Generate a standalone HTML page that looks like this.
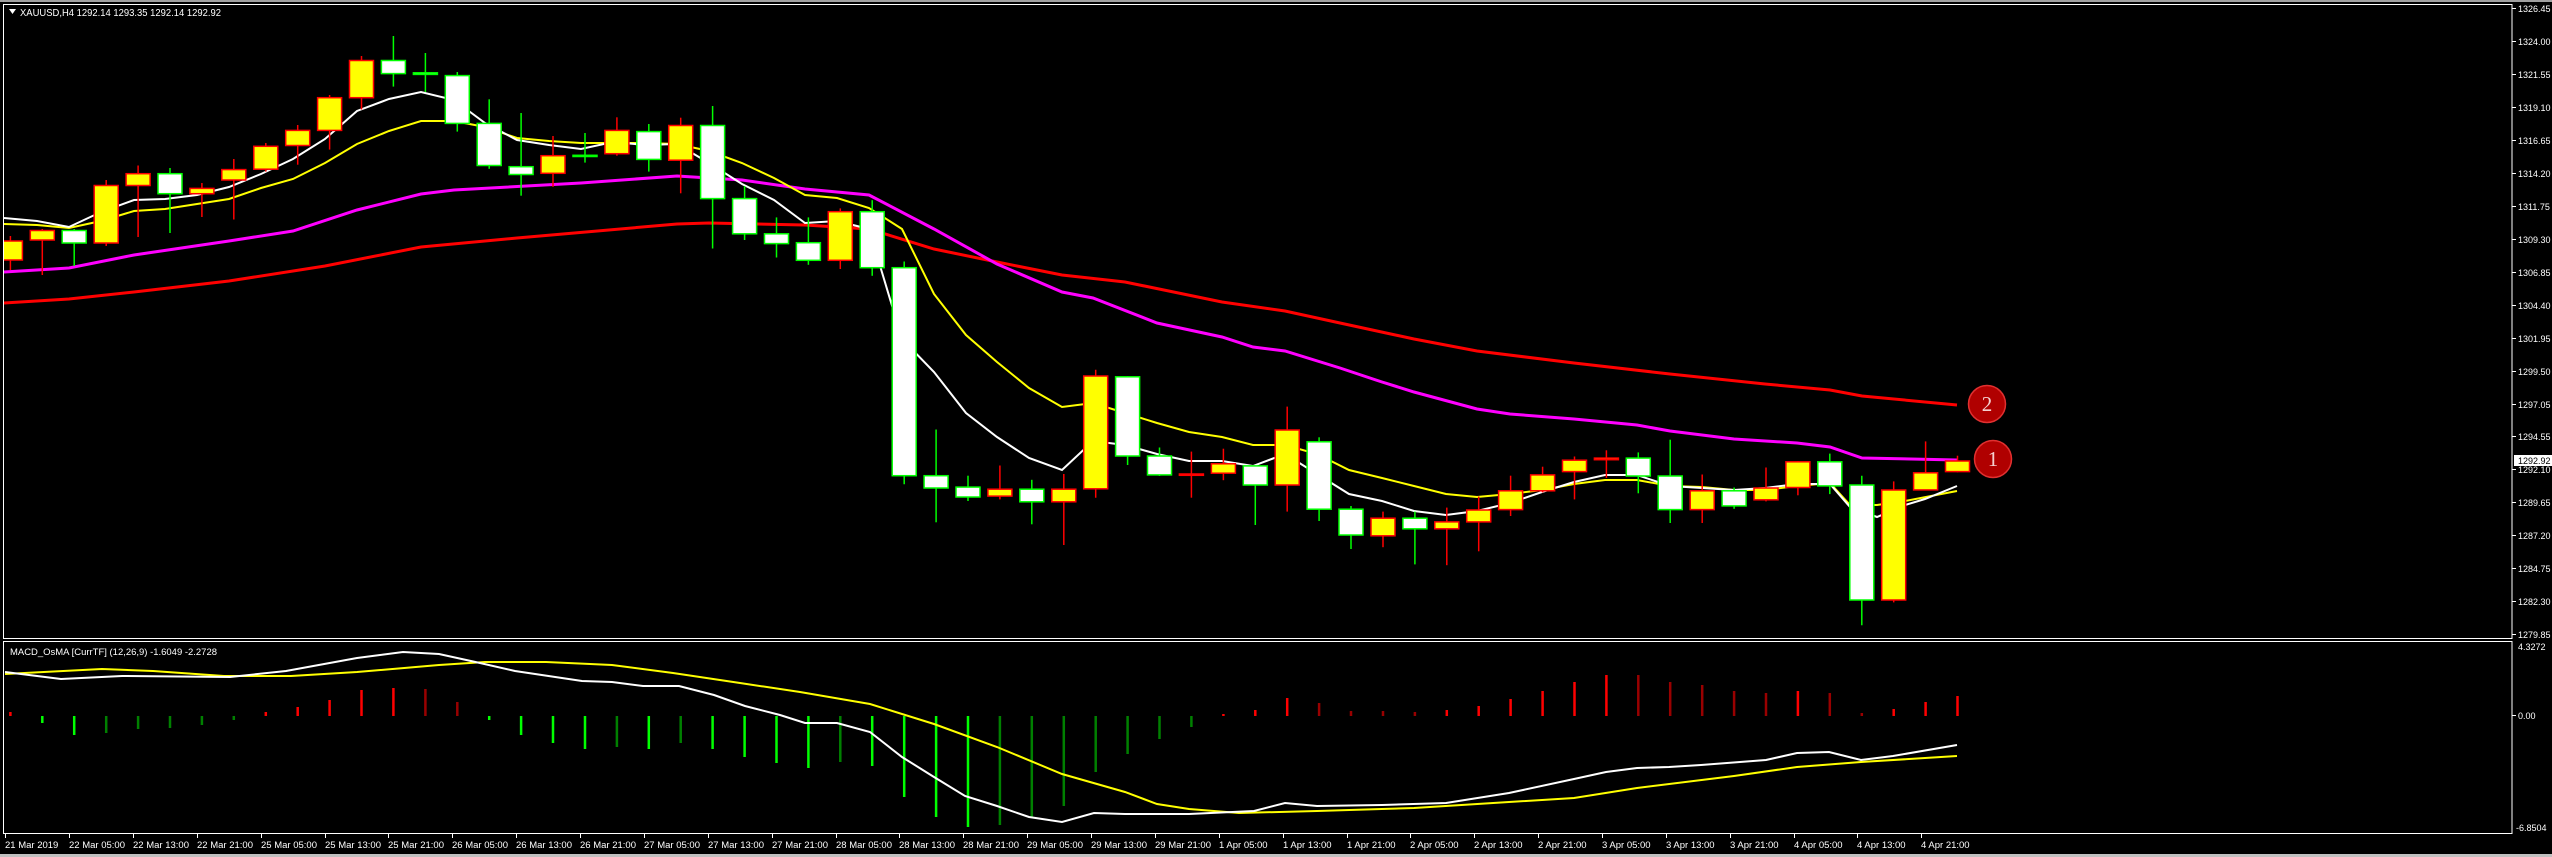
<!DOCTYPE html>
<html><head><meta charset="utf-8"><style>
html,body{margin:0;padding:0;background:#000;}
svg{display:block;}
text{font-family:"Liberation Sans",sans-serif;fill:#fff;}
.y line{stroke:#f00;stroke-width:1.5}
.y rect{fill:#ff0;stroke:#f00;stroke-width:1.5}
.w line{stroke:#0f0;stroke-width:1.5}
.w rect{fill:#fff;stroke:#0f0;stroke-width:1.5}
.ax text{font-size:9px}
.dt text{font-size:9.5px}
</style></head><body>
<svg width="2552" height="857" viewBox="0 0 2552 857" xmlns="http://www.w3.org/2000/svg">
<rect x="0" y="0" width="2552" height="857" fill="#000"/>
<rect x="0" y="0" width="2552" height="2" fill="#a0a0a0"/>
<rect x="0" y="854" width="2552" height="3" fill="#c0c0c0"/>
<defs><clipPath id="c1"><rect x="4" y="5" width="2508" height="633"/></clipPath></defs>
<!-- frames -->
<rect x="3.5" y="4.5" width="2508.5" height="634" fill="none" stroke="#fff" stroke-width="1"/>
<rect x="3.5" y="641.5" width="2508.5" height="192" fill="none" stroke="#fff" stroke-width="1"/>
<g clip-path="url(#c1)">
<!-- MAs -->
<polyline fill="none" stroke="#f00" stroke-width="3" points="4,303 69,299 134,292 229,281 325,266 421,247 517,238 677,224 709,223 805,225 869,229 934,249 997,262 1062,275 1125,282 1222,302 1285,311 1340,323 1414,339 1477,351 1574,363 1670,374 1765,384 1830,390 1862,396 1957,405"/>
<polyline fill="none" stroke="#f0f" stroke-width="3" points="4,272 69,268 134,255 229,241 293,231 357,210 421,194 454,190 581,183 677,176 742,180 805,189 869,195 934,229 997,264 1062,292 1093,298 1157,323 1222,337 1253,347 1285,351 1340,368 1382,382 1414,392 1477,409 1510,414 1574,419 1637,425 1670,431 1734,439 1797,443 1830,447 1862,458 1957,460"/>
<polyline fill="none" stroke="#ff0" stroke-width="2" points="4,224 37,225 69,228 101,221 134,211 165,209 197,204 229,199 261,188 293,179 325,163 357,144 389,131 421,121 454,121 485,127 517,138 549,141 581,143 613,143 645,143 677,144 709,151 742,163 774,178 805,195 837,198 869,208 902,229 934,294 966,335 997,362 1029,388 1062,407 1093,403 1125,413 1157,423 1189,432 1222,437 1253,445 1285,445 1317,454 1349,470 1382,478 1414,486 1446,494 1477,497 1510,494 1542,490 1574,484 1605,480 1637,480 1670,486 1702,487 1734,490 1765,490 1797,486 1830,483 1850,505 1877,505 1905,501 1957,491"/>
<polyline fill="none" stroke="#fff" stroke-width="2" points="4,218 37,221 69,227 101,212 134,200 165,199 197,195 229,187 261,174 293,159 325,139 357,111 389,99 421,92 454,100 485,123 517,140 549,145 581,149 613,142 645,145 677,144 709,163 742,184 774,200 805,223 837,221 869,229 902,339 934,372 966,413 997,437 1029,458 1062,470 1093,441 1125,445 1157,454 1189,461 1222,461 1253,466 1285,454 1317,474 1349,494 1382,501 1414,511 1446,515 1477,511 1510,503 1542,492 1574,482 1605,475 1637,475 1670,486 1702,488 1734,490 1765,488 1797,484 1830,484 1850,507 1877,517 1905,505 1925,499 1957,486"/>
<!-- candles -->
<g class="y"><line x1="10.4" y1="236" x2="10.4" y2="270"/><rect x="-1.6" y="241" width="24" height="19"/></g>
<g class="y"><line x1="42.3" y1="229" x2="42.3" y2="275"/><rect x="30.3" y="230.5" width="24" height="9.5"/></g>
<g class="w"><line x1="74.2" y1="229" x2="74.2" y2="266"/><rect x="62.2" y="230.5" width="24" height="12.5"/></g>
<g class="y"><line x1="106.2" y1="180" x2="106.2" y2="246"/><rect x="94.2" y="185.5" width="24" height="57.5"/></g>
<g class="y"><line x1="138.1" y1="165.5" x2="138.1" y2="237"/><rect x="126.1" y="173.7" width="24" height="11.8"/></g>
<g class="w"><line x1="170" y1="168" x2="170" y2="233"/><rect x="158" y="173.7" width="24" height="20"/></g>
<g class="y"><line x1="201.9" y1="183" x2="201.9" y2="217"/><rect x="189.9" y="188.4" width="24" height="5.3"/></g>
<g class="y"><line x1="233.8" y1="159" x2="233.8" y2="219.5"/><rect x="221.8" y="169.6" width="24" height="10.4"/></g>
<g class="y"><line x1="265.8" y1="143" x2="265.8" y2="171.6"/><rect x="253.8" y="146.3" width="24" height="22.9"/></g>
<g class="y"><line x1="297.7" y1="125" x2="297.7" y2="164.7"/><rect x="285.7" y="130.4" width="24" height="15.1"/></g>
<g class="y"><line x1="329.6" y1="95" x2="329.6" y2="149.6"/><rect x="317.6" y="97.7" width="24" height="32.7"/></g>
<g class="y"><line x1="361.5" y1="56" x2="361.5" y2="109.5"/><rect x="349.5" y="60.5" width="24" height="37.2"/></g>
<g class="w"><line x1="393.4" y1="36" x2="393.4" y2="86.6"/><rect x="381.4" y="60.5" width="24" height="13.1"/></g>
<g class="w"><line x1="425.4" y1="53" x2="425.4" y2="92"/><rect x="413.4" y="72.8" width="24" height="1.6"/></g>
<g class="w"><line x1="457.3" y1="72" x2="457.3" y2="131.6"/><rect x="445.3" y="75.6" width="24" height="47.8"/></g>
<g class="w"><line x1="489.2" y1="99.3" x2="489.2" y2="168.8"/><rect x="477.2" y="123.4" width="24" height="42.1"/></g>
<g class="w"><line x1="521.1" y1="113" x2="521.1" y2="195.7"/><rect x="509.1" y="166.7" width="24" height="7.8"/></g>
<g class="y"><line x1="553" y1="136" x2="553" y2="186.8"/><rect x="541" y="155.7" width="24" height="17.6"/></g>
<g class="w"><line x1="585" y1="133" x2="585" y2="162.6"/><rect x="573" y="155.3" width="24" height="1.2"/></g>
<g class="y"><line x1="616.9" y1="117.3" x2="616.9" y2="155.7"/><rect x="604.9" y="130.4" width="24" height="23.3"/></g>
<g class="w"><line x1="648.8" y1="124" x2="648.8" y2="171.6"/><rect x="636.8" y="131.6" width="24" height="27.8"/></g>
<g class="y"><line x1="680.7" y1="117.7" x2="680.7" y2="193.3"/><rect x="668.7" y="125.5" width="24" height="34.7"/></g>
<g class="w"><line x1="712.6" y1="106" x2="712.6" y2="248.5"/><rect x="700.6" y="125.5" width="24" height="73.1"/></g>
<g class="w"><line x1="744.6" y1="186" x2="744.6" y2="240"/><rect x="732.6" y="198.6" width="24" height="35.2"/></g>
<g class="w"><line x1="776.5" y1="217.4" x2="776.5" y2="257.5"/><rect x="764.5" y="233.8" width="24" height="9.8"/></g>
<g class="w"><line x1="808.4" y1="217.4" x2="808.4" y2="264.8"/><rect x="796.4" y="242.7" width="24" height="17.6"/></g>
<g class="y"><line x1="840.3" y1="208.4" x2="840.3" y2="269"/><rect x="828.3" y="211.7" width="24" height="48.6"/></g>
<g class="w"><line x1="872.2" y1="200.2" x2="872.2" y2="275.8"/><rect x="860.2" y="211.7" width="24" height="56"/></g>
<g class="w"><line x1="904.2" y1="261.5" x2="904.2" y2="484.3"/><rect x="892.2" y="267.7" width="24" height="208"/></g>
<g class="w"><line x1="936.1" y1="429.5" x2="936.1" y2="522.3"/><rect x="924.1" y="475.7" width="24" height="12.3"/></g>
<g class="w"><line x1="968" y1="475.7" x2="968" y2="501"/><rect x="956" y="487.1" width="24" height="9.9"/></g>
<g class="y"><line x1="999.9" y1="465.5" x2="999.9" y2="499.4"/><rect x="987.9" y="489.2" width="24" height="6.9"/></g>
<g class="w"><line x1="1031.8" y1="479.8" x2="1031.8" y2="524.3"/><rect x="1019.8" y="489.2" width="24" height="12.6"/></g>
<g class="y"><line x1="1063.8" y1="474" x2="1063.8" y2="545"/><rect x="1051.8" y="489.2" width="24" height="12.6"/></g>
<g class="y"><line x1="1095.7" y1="369.8" x2="1095.7" y2="497.7"/><rect x="1083.7" y="376" width="24" height="112.8"/></g>
<g class="w"><line x1="1127.6" y1="376" x2="1127.6" y2="465"/><rect x="1115.6" y="376.8" width="24" height="79.2"/></g>
<g class="w"><line x1="1159.5" y1="447.5" x2="1159.5" y2="476"/><rect x="1147.5" y="456" width="24" height="18.9"/></g>
<g class="y"><line x1="1191.4" y1="451.6" x2="1191.4" y2="497.7"/><rect x="1179.4" y="474" width="24" height="1.3"/></g>
<g class="y"><line x1="1223.4" y1="448.7" x2="1223.4" y2="480.2"/><rect x="1211.4" y="463.8" width="24" height="9.4"/></g>
<g class="w"><line x1="1255.3" y1="465.9" x2="1255.3" y2="525"/><rect x="1243.3" y="465.9" width="24" height="19.1"/></g>
<g class="y"><line x1="1287.2" y1="406.6" x2="1287.2" y2="511.6"/><rect x="1275.2" y="430" width="24" height="55"/></g>
<g class="w"><line x1="1319.1" y1="437.3" x2="1319.1" y2="521"/><rect x="1307.1" y="441.8" width="24" height="67.4"/></g>
<g class="w"><line x1="1351" y1="506" x2="1351" y2="549"/><rect x="1339" y="509.2" width="24" height="25.8"/></g>
<g class="y"><line x1="1383" y1="511.6" x2="1383" y2="547.2"/><rect x="1371" y="518.2" width="24" height="17.6"/></g>
<g class="w"><line x1="1414.9" y1="511.6" x2="1414.9" y2="564.4"/><rect x="1402.9" y="518.2" width="24" height="10.6"/></g>
<g class="y"><line x1="1446.8" y1="507.6" x2="1446.8" y2="565.2"/><rect x="1434.8" y="521.9" width="24" height="6.9"/></g>
<g class="y"><line x1="1478.7" y1="496.5" x2="1478.7" y2="551.3"/><rect x="1466.7" y="510" width="24" height="11.9"/></g>
<g class="y"><line x1="1510.6" y1="475.7" x2="1510.6" y2="516"/><rect x="1498.6" y="490.8" width="24" height="18.8"/></g>
<g class="y"><line x1="1542.6" y1="466.7" x2="1542.6" y2="492.4"/><rect x="1530.6" y="474.9" width="24" height="15.9"/></g>
<g class="y"><line x1="1574.5" y1="456.5" x2="1574.5" y2="499.4"/><rect x="1562.5" y="460.2" width="24" height="11.4"/></g>
<g class="y"><line x1="1606.4" y1="450.3" x2="1606.4" y2="478"/><rect x="1594.4" y="458.1" width="24" height="1.6"/></g>
<g class="w"><line x1="1638.3" y1="452.4" x2="1638.3" y2="493.3"/><rect x="1626.3" y="458.1" width="24" height="17.9"/></g>
<g class="w"><line x1="1670.2" y1="439.7" x2="1670.2" y2="523"/><rect x="1658.2" y="476" width="24" height="33.6"/></g>
<g class="y"><line x1="1702.2" y1="474.5" x2="1702.2" y2="523"/><rect x="1690.2" y="490.8" width="24" height="18.8"/></g>
<g class="w"><line x1="1734.1" y1="487.5" x2="1734.1" y2="508.8"/><rect x="1722.1" y="490.8" width="24" height="15.1"/></g>
<g class="y"><line x1="1766" y1="467.5" x2="1766" y2="501.4"/><rect x="1754" y="488" width="24" height="11.8"/></g>
<g class="y"><line x1="1797.9" y1="461" x2="1797.9" y2="495.3"/><rect x="1785.9" y="461.8" width="24" height="25.7"/></g>
<g class="w"><line x1="1829.8" y1="453.6" x2="1829.8" y2="494.1"/><rect x="1817.8" y="461.8" width="24" height="24.1"/></g>
<g class="w"><line x1="1861.8" y1="475.7" x2="1861.8" y2="625.3"/><rect x="1849.8" y="485" width="24" height="115"/></g>
<g class="y"><line x1="1893.7" y1="481.4" x2="1893.7" y2="602.4"/><rect x="1881.7" y="490" width="24" height="110"/></g>
<g class="y"><line x1="1925.6" y1="441.4" x2="1925.6" y2="490.4"/><rect x="1913.6" y="472.8" width="24" height="17.1"/></g>
<g class="y"><line x1="1957.5" y1="455.7" x2="1957.5" y2="472.4"/><rect x="1945.5" y="461" width="24" height="10.6"/></g>
<!-- markers -->
<circle cx="1987" cy="404" r="18.5" fill="#b00000" stroke="#e03030" stroke-width="1.5"/>
<text x="1987" y="411" text-anchor="middle" style="font-family:'Liberation Serif',serif;font-size:21px;fill:#f4d0d0">2</text>
<circle cx="1993" cy="459" r="18.5" fill="#b00000" stroke="#e03030" stroke-width="1.5"/>
<text x="1993" y="466" text-anchor="middle" style="font-family:'Liberation Serif',serif;font-size:21px;fill:#f4d0d0">1</text>
</g>
<!-- header -->
<polygon points="9,9 16,9 12.5,14" fill="#fff"/>
<text x="20" y="16" style="font-size:10px" textLength="201" lengthAdjust="spacingAndGlyphs">XAUUSD,H4  1292.14 1293.35 1292.14 1292.92</text>
<!-- MACD pane -->
<text x="10" y="655" style="font-size:9.5px" textLength="207" lengthAdjust="spacingAndGlyphs">MACD_OsMA [CurrTF] (12,26,9) -1.6049 -2.2728</text>
<g stroke-width="2.5">
<line x1="10.4" y1="716" x2="10.4" y2="712" stroke="#f00"/>
<line x1="42.3" y1="716" x2="42.3" y2="723" stroke="#0f0"/>
<line x1="74.2" y1="716" x2="74.2" y2="735" stroke="#0f0"/>
<line x1="106.2" y1="716" x2="106.2" y2="733" stroke="#008000"/>
<line x1="138.1" y1="716" x2="138.1" y2="729" stroke="#008000"/>
<line x1="170" y1="716" x2="170" y2="728" stroke="#008000"/>
<line x1="201.9" y1="716" x2="201.9" y2="725" stroke="#008000"/>
<line x1="233.8" y1="716" x2="233.8" y2="720" stroke="#008000"/>
<line x1="265.8" y1="716" x2="265.8" y2="712" stroke="#f00"/>
<line x1="297.7" y1="716" x2="297.7" y2="707" stroke="#f00"/>
<line x1="329.6" y1="716" x2="329.6" y2="700" stroke="#f00"/>
<line x1="361.5" y1="716" x2="361.5" y2="690" stroke="#f00"/>
<line x1="393.4" y1="716" x2="393.4" y2="688" stroke="#f00"/>
<line x1="425.4" y1="716" x2="425.4" y2="689" stroke="#900"/>
<line x1="457.3" y1="716" x2="457.3" y2="702" stroke="#900"/>
<line x1="489.2" y1="716" x2="489.2" y2="720" stroke="#0f0"/>
<line x1="521.1" y1="716" x2="521.1" y2="735" stroke="#0f0"/>
<line x1="553" y1="716" x2="553" y2="743" stroke="#0f0"/>
<line x1="585" y1="716" x2="585" y2="749" stroke="#0f0"/>
<line x1="616.9" y1="716" x2="616.9" y2="747" stroke="#008000"/>
<line x1="648.8" y1="716" x2="648.8" y2="749" stroke="#0f0"/>
<line x1="680.7" y1="716" x2="680.7" y2="743" stroke="#008000"/>
<line x1="712.6" y1="716" x2="712.6" y2="749" stroke="#0f0"/>
<line x1="744.6" y1="716" x2="744.6" y2="757" stroke="#0f0"/>
<line x1="776.5" y1="716" x2="776.5" y2="763" stroke="#0f0"/>
<line x1="808.4" y1="716" x2="808.4" y2="768" stroke="#0f0"/>
<line x1="840.3" y1="716" x2="840.3" y2="762" stroke="#008000"/>
<line x1="872.2" y1="716" x2="872.2" y2="766" stroke="#0f0"/>
<line x1="904.2" y1="716" x2="904.2" y2="797" stroke="#0f0"/>
<line x1="936.1" y1="716" x2="936.1" y2="817" stroke="#0f0"/>
<line x1="968" y1="716" x2="968" y2="827" stroke="#0f0"/>
<line x1="999.9" y1="716" x2="999.9" y2="825" stroke="#008000"/>
<line x1="1031.8" y1="716" x2="1031.8" y2="817" stroke="#008000"/>
<line x1="1063.8" y1="716" x2="1063.8" y2="806" stroke="#008000"/>
<line x1="1095.7" y1="716" x2="1095.7" y2="772" stroke="#008000"/>
<line x1="1127.6" y1="716" x2="1127.6" y2="754" stroke="#008000"/>
<line x1="1159.5" y1="716" x2="1159.5" y2="739" stroke="#008000"/>
<line x1="1191.4" y1="716" x2="1191.4" y2="727" stroke="#008000"/>
<line x1="1223.4" y1="716" x2="1223.4" y2="714" stroke="#f00"/>
<line x1="1255.3" y1="716" x2="1255.3" y2="710" stroke="#f00"/>
<line x1="1287.2" y1="716" x2="1287.2" y2="698" stroke="#f00"/>
<line x1="1319.1" y1="716" x2="1319.1" y2="703" stroke="#900"/>
<line x1="1351" y1="716" x2="1351" y2="711" stroke="#900"/>
<line x1="1383" y1="716" x2="1383" y2="711" stroke="#900"/>
<line x1="1414.9" y1="716" x2="1414.9" y2="712" stroke="#900"/>
<line x1="1446.8" y1="716" x2="1446.8" y2="710" stroke="#f00"/>
<line x1="1478.7" y1="716" x2="1478.7" y2="706" stroke="#f00"/>
<line x1="1510.6" y1="716" x2="1510.6" y2="699" stroke="#f00"/>
<line x1="1542.6" y1="716" x2="1542.6" y2="691" stroke="#f00"/>
<line x1="1574.5" y1="716" x2="1574.5" y2="682" stroke="#f00"/>
<line x1="1606.4" y1="716" x2="1606.4" y2="675" stroke="#f00"/>
<line x1="1638.3" y1="716" x2="1638.3" y2="675" stroke="#900"/>
<line x1="1670.2" y1="716" x2="1670.2" y2="682" stroke="#900"/>
<line x1="1702.2" y1="716" x2="1702.2" y2="685" stroke="#900"/>
<line x1="1734.1" y1="716" x2="1734.1" y2="691" stroke="#900"/>
<line x1="1766" y1="716" x2="1766" y2="693" stroke="#900"/>
<line x1="1797.9" y1="716" x2="1797.9" y2="691" stroke="#f00"/>
<line x1="1829.8" y1="716" x2="1829.8" y2="693" stroke="#900"/>
<line x1="1861.8" y1="716" x2="1861.8" y2="713" stroke="#900"/>
<line x1="1893.7" y1="716" x2="1893.7" y2="709" stroke="#f00"/>
<line x1="1925.6" y1="716" x2="1925.6" y2="702" stroke="#f00"/>
<line x1="1957.5" y1="716" x2="1957.5" y2="696" stroke="#f00"/>
</g>
<polyline fill="none" stroke="#ff0" stroke-width="2" points="5,674 102,669 153,671 224,676 291,676 357,672 439,665 485,662 546,662 612,665 673,673 740,683 800,692 870,704 934,724 997,747 1062,774 1125,792 1157,804 1189,809 1239,813 1317,811 1414,808 1509,802 1574,798 1637,788 1734,776 1797,767 1861,762 1957,756"/>
<polyline fill="none" stroke="#fff" stroke-width="2" points="5,672 61,679 122,676 230,677 286,671 357,658 403,652 439,654 480,663 515,671 582,681 612,682 643,686 679,686 714,695 745,706 780,715 805,723 837,723 870,732 902,757 934,777 965,796 997,806 1029,817 1062,822 1094,813 1125,814 1189,814 1254,811 1285,803 1317,806 1382,805 1446,803 1509,793 1574,779 1606,772 1637,768 1669,767 1701,765 1766,760 1797,753 1829,752 1861,760 1893,756 1957,745"/>
<!-- price axis -->
<g class="ax" stroke="#fff" stroke-width="1">
<line x1="2512" y1="8.5" x2="2516" y2="8.5"/><line x1="2512" y1="41.5" x2="2516" y2="41.5"/><line x1="2512" y1="74.5" x2="2516" y2="74.5"/><line x1="2512" y1="107.5" x2="2516" y2="107.5"/><line x1="2512" y1="140.5" x2="2516" y2="140.5"/><line x1="2512" y1="173.5" x2="2516" y2="173.5"/><line x1="2512" y1="206.5" x2="2516" y2="206.5"/><line x1="2512" y1="239.5" x2="2516" y2="239.5"/><line x1="2512" y1="272.5" x2="2516" y2="272.5"/><line x1="2512" y1="305.5" x2="2516" y2="305.5"/><line x1="2512" y1="338.5" x2="2516" y2="338.5"/><line x1="2512" y1="371.5" x2="2516" y2="371.5"/><line x1="2512" y1="404.5" x2="2516" y2="404.5"/><line x1="2512" y1="436.5" x2="2516" y2="436.5"/><line x1="2512" y1="469.5" x2="2516" y2="469.5"/><line x1="2512" y1="502.5" x2="2516" y2="502.5"/><line x1="2512" y1="535.5" x2="2516" y2="535.5"/><line x1="2512" y1="568.5" x2="2516" y2="568.5"/><line x1="2512" y1="601.5" x2="2516" y2="601.5"/><line x1="2512" y1="634.5" x2="2516" y2="634.5"/>
<line x1="2512" y1="715.5" x2="2516" y2="715.5"/>
</g>
<g class="ax">
<text x="2518" y="12">1326.45</text><text x="2518" y="45">1324.00</text><text x="2518" y="78">1321.55</text><text x="2518" y="111">1319.10</text><text x="2518" y="144">1316.65</text><text x="2518" y="177">1314.20</text><text x="2518" y="210">1311.75</text><text x="2518" y="243">1309.30</text><text x="2518" y="276">1306.85</text><text x="2518" y="309">1304.40</text><text x="2518" y="342">1301.95</text><text x="2518" y="375">1299.50</text><text x="2518" y="408">1297.05</text><text x="2518" y="440">1294.55</text><text x="2518" y="473">1292.10</text><text x="2518" y="506">1289.65</text><text x="2518" y="539">1287.20</text><text x="2518" y="572">1284.75</text><text x="2518" y="605">1282.30</text><text x="2518" y="638">1279.85</text>
<text x="2518" y="650">4.3272</text><text x="2518" y="719">0.00</text><text x="2516" y="831">-6.8504</text>
</g>
<rect x="2514" y="455" width="38" height="11" fill="#fff"/>
<text x="2518" y="464" style="font-size:9px;fill:#000">1292.92</text>
<!-- dates -->
<g stroke="#fff" stroke-width="1">
<line x1="5.5" y1="834" x2="5.5" y2="838"/><line x1="69.5" y1="834" x2="69.5" y2="838"/><line x1="133.5" y1="834" x2="133.5" y2="838"/><line x1="197.5" y1="834" x2="197.5" y2="838"/><line x1="261.5" y1="834" x2="261.5" y2="838"/><line x1="325.5" y1="834" x2="325.5" y2="838"/><line x1="388.5" y1="834" x2="388.5" y2="838"/><line x1="452.5" y1="834" x2="452.5" y2="838"/><line x1="516.5" y1="834" x2="516.5" y2="838"/><line x1="580.5" y1="834" x2="580.5" y2="838"/><line x1="644.5" y1="834" x2="644.5" y2="838"/><line x1="708.5" y1="834" x2="708.5" y2="838"/><line x1="772.5" y1="834" x2="772.5" y2="838"/><line x1="836.5" y1="834" x2="836.5" y2="838"/><line x1="899.5" y1="834" x2="899.5" y2="838"/><line x1="963.5" y1="834" x2="963.5" y2="838"/><line x1="1027.5" y1="834" x2="1027.5" y2="838"/><line x1="1091.5" y1="834" x2="1091.5" y2="838"/><line x1="1155.5" y1="834" x2="1155.5" y2="838"/><line x1="1219.5" y1="834" x2="1219.5" y2="838"/><line x1="1283.5" y1="834" x2="1283.5" y2="838"/><line x1="1347.5" y1="834" x2="1347.5" y2="838"/><line x1="1410.5" y1="834" x2="1410.5" y2="838"/><line x1="1474.5" y1="834" x2="1474.5" y2="838"/><line x1="1538.5" y1="834" x2="1538.5" y2="838"/><line x1="1602.5" y1="834" x2="1602.5" y2="838"/><line x1="1666.5" y1="834" x2="1666.5" y2="838"/><line x1="1730.5" y1="834" x2="1730.5" y2="838"/><line x1="1794.5" y1="834" x2="1794.5" y2="838"/><line x1="1857.5" y1="834" x2="1857.5" y2="838"/><line x1="1921.5" y1="834" x2="1921.5" y2="838"/>
</g>
<g class="dt">
<text x="5" y="848">21 Mar 2019</text><text x="69" y="848">22 Mar 05:00</text><text x="133" y="848">22 Mar 13:00</text><text x="197" y="848">22 Mar 21:00</text><text x="261" y="848">25 Mar 05:00</text><text x="325" y="848">25 Mar 13:00</text><text x="388" y="848">25 Mar 21:00</text><text x="452" y="848">26 Mar 05:00</text><text x="516" y="848">26 Mar 13:00</text><text x="580" y="848">26 Mar 21:00</text><text x="644" y="848">27 Mar 05:00</text><text x="708" y="848">27 Mar 13:00</text><text x="772" y="848">27 Mar 21:00</text><text x="836" y="848">28 Mar 05:00</text><text x="899" y="848">28 Mar 13:00</text><text x="963" y="848">28 Mar 21:00</text><text x="1027" y="848">29 Mar 05:00</text><text x="1091" y="848">29 Mar 13:00</text><text x="1155" y="848">29 Mar 21:00</text><text x="1219" y="848">1 Apr 05:00</text><text x="1283" y="848">1 Apr 13:00</text><text x="1347" y="848">1 Apr 21:00</text><text x="1410" y="848">2 Apr 05:00</text><text x="1474" y="848">2 Apr 13:00</text><text x="1538" y="848">2 Apr 21:00</text><text x="1602" y="848">3 Apr 05:00</text><text x="1666" y="848">3 Apr 13:00</text><text x="1730" y="848">3 Apr 21:00</text><text x="1794" y="848">4 Apr 05:00</text><text x="1857" y="848">4 Apr 13:00</text><text x="1921" y="848">4 Apr 21:00</text>
</g>
</svg>
</body></html>
